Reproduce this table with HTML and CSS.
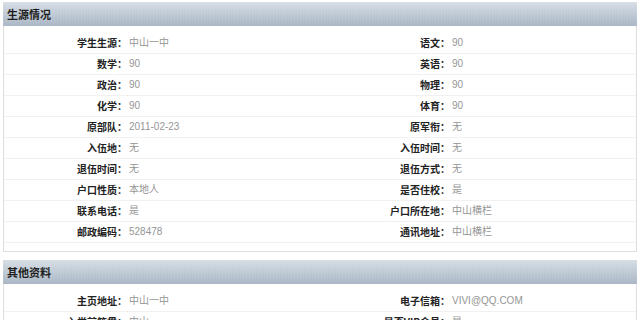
FILE: index.html
```html
<!DOCTYPE html>
<html lang="zh-CN">
<head>
<meta charset="utf-8">
<title>生源情况</title>
<link rel="stylesheet" href="styles.css">
</head>
<body>
<div class="page">
  <section class="box">
    <h2 class="box-head">生源情况</h2>
    <div class="rows">
      <div class="row"><span class="lb">学生生源：</span><span class="val">中山一中</span><span class="lb">语文：</span><span class="val">90</span></div>
      <div class="row"><span class="lb">数学：</span><span class="val">90</span><span class="lb">英语：</span><span class="val">90</span></div>
      <div class="row"><span class="lb">政治：</span><span class="val">90</span><span class="lb">物理：</span><span class="val">90</span></div>
      <div class="row"><span class="lb">化学：</span><span class="val">90</span><span class="lb">体育：</span><span class="val">90</span></div>
      <div class="row"><span class="lb">原部队：</span><span class="val">2011-02-23</span><span class="lb">原军衔：</span><span class="val">无</span></div>
      <div class="row"><span class="lb">入伍地：</span><span class="val">无</span><span class="lb">入伍时间：</span><span class="val">无</span></div>
      <div class="row"><span class="lb">退伍时间：</span><span class="val">无</span><span class="lb">退伍方式：</span><span class="val">无</span></div>
      <div class="row"><span class="lb">户口性质：</span><span class="val">本地人</span><span class="lb">是否住校：</span><span class="val">是</span></div>
      <div class="row"><span class="lb">联系电话：</span><span class="val">是</span><span class="lb">户口所在地：</span><span class="val">中山横栏</span></div>
      <div class="row"><span class="lb">邮政编码：</span><span class="val">528478</span><span class="lb">通讯地址：</span><span class="val">中山横栏</span></div>
    </div>
  </section>
  <section class="box">
    <h2 class="box-head">其他资料</h2>
    <div class="rows">
      <div class="row"><span class="lb">主页地址：</span><span class="val">中山一中</span><span class="lb">电子信箱：</span><span class="val">VIVI@QQ.COM</span></div>
      <div class="row"><span class="lb">入学前籍贯：</span><span class="val">中山</span><span class="lb">是否VIP会员：</span><span class="val">是</span></div>
    </div>
  </section>
</div>
</body>
</html>
```

FILE: styles.css
```css
html, body {
  margin: 0;
  padding: 0;
  background: #ffffff;
}

.page {
  padding: 2px 3px 0 3px;
  font-family: "Liberation Sans", "Noto Sans CJK SC", sans-serif;
  font-size: 10px;
}

.box {
  border: 1px solid #dedede;
  border-top: 0;
  margin-bottom: 8px;
  background: #ffffff;
}

.box-head {
  margin: 0 -1px;
  height: 24px;
  line-height: 24px;
  padding-left: 4px;
  font-family: "Noto Sans CJK SC", sans-serif;
  font-size: 11px;
  font-weight: 700;
  color: #1e1e1e;
  background:
    repeating-linear-gradient(90deg, rgba(255,255,255,0.06) 0 1px, rgba(0,0,0,0) 1px 3px),
    linear-gradient(180deg, #d6dde5 0%, #c2ccd6 45%, #a9b6c5 100%);
}

.rows {
  padding: 7px 0 8px 0;
}

.row {
  display: grid;
  grid-template-columns: 123px 193px 130px 1fr;
  height: 21px;
  box-sizing: border-box;
  border-bottom: 1px solid #f1f1f1;
  line-height: 20px;
}

.lb {
  text-align: right;
  font-family: "Noto Sans CJK SC", sans-serif;
  font-weight: 700;
  color: #222222;
  white-space: nowrap;
}

.val {
  padding-left: 2px;
  color: #959595;
  white-space: nowrap;
}
```
